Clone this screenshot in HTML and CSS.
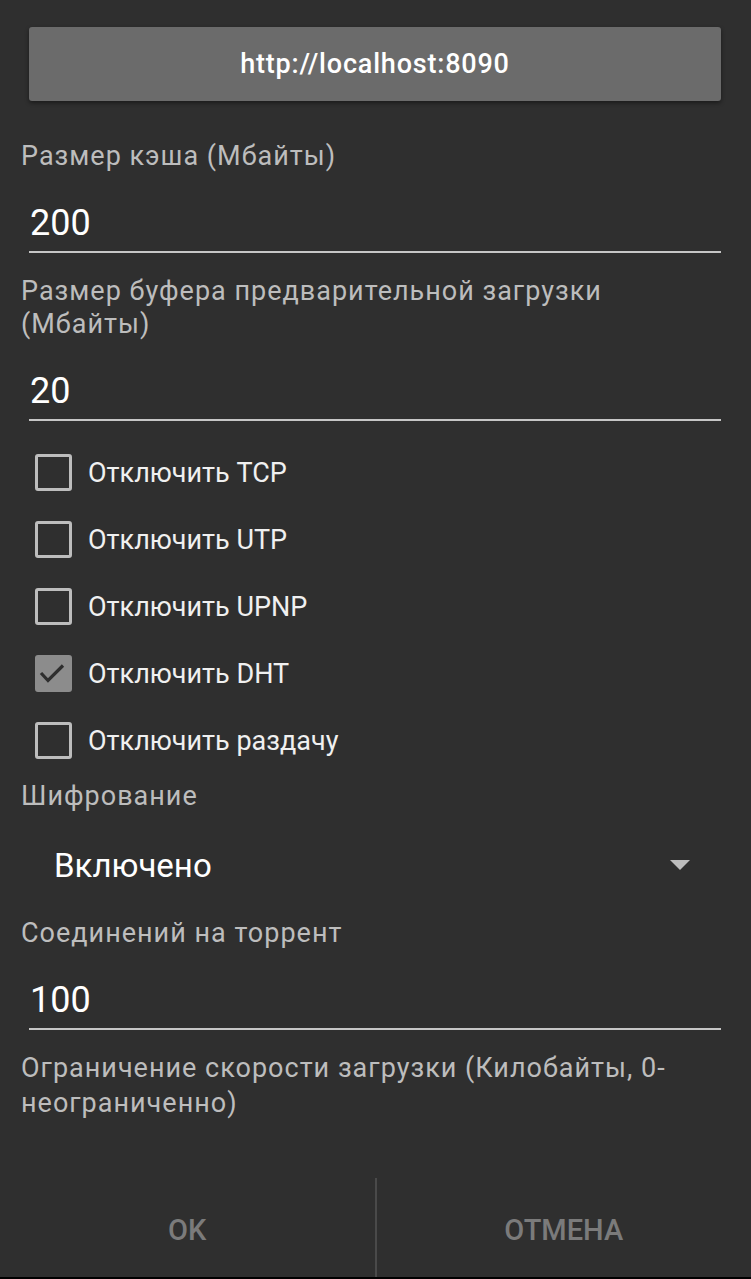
FILE: index.html
```html
<!DOCTYPE html>
<html>
  <head>
    <title>Настройки</title>
    <link rel="stylesheet" href="styles.css">
  </head>
  <body>
    <div class="dialog">
      <div class="content">
        <div class="url-button">http://localhost:8090</div>

        <div class="label">Размер кэша (Мбайты)</div>
        <div class="field">200</div>

        <div class="label">Размер буфера предварительной загрузки (Мбайты)</div>
        <div class="field">20</div>

        <div class="checks">
          <div class="check-row"><span class="box"></span><span class="check-text">Отключить TCP</span></div>
          <div class="check-row"><span class="box"></span><span class="check-text">Отключить UTP</span></div>
          <div class="check-row"><span class="box"></span><span class="check-text">Отключить UPNP</span></div>
          <div class="check-row">
            <span class="box checked">
              <svg width="37" height="37" viewBox="0 0 37 37"><polyline points="6,18 13,25.5 28,10.5" fill="none" stroke="#2e2e2e" stroke-width="3.2"/></svg>
            </span>
            <span class="check-text">Отключить DHT</span>
          </div>
          <div class="check-row"><span class="box"></span><span class="check-text">Отключить раздачу</span></div>
        </div>

        <div class="label label-spin">Шифрование</div>
        <div class="spinner">
          <span class="spinner-value">Включено</span>
          <span class="arrow"></span>
        </div>

        <div class="label label-after-spin">Соединений на торрент</div>
        <div class="field">100</div>

        <div class="label label-last">Ограничение скорости загрузки (Килобайты, 0-неограниченно)</div>
      </div>

      <div class="buttons">
        <div class="btn">OK</div>
        <div class="btn">ОТМЕНА</div>
      </div>
    </div>
  </body>
</html>
```

FILE: styles.css
```css
/* общий фон */
body {
  margin: 0;
  background-color: #2f2f2f;
  font-family: Roboto, "Noto Sans", sans-serif;
}

.dialog {
  height: 1279px;
  display: flex;
  flex-direction: column;
}

.content {
  flex: 1;
}

/* кнопка адреса */
.url-button {
  margin: 27px 30px 0 29px;
  height: 74px;
  display: flex;
  align-items: center;
  justify-content: center;
  background-color: #6b6b6b;
  border-radius: 3px;
  box-shadow: 0 2px 4px rgba(0, 0, 0, 0.45);
  color: #fff;
  font-size: 27px;
  font-weight: 500;
  letter-spacing: 0.8px;
}

/* подписи */
.label {
  margin: 22px 20px 0 21px;
  font-size: 27px;
  letter-spacing: 1px;
  line-height: 33px;
  color: #bdbdbd;
}

.url-button + .label {
  margin-top: 39px;
}

.label-spin {
  margin-top: 6px;
}

.label-after-spin {
  margin-top: 0;
}

.label-last {
  margin-top: 21px;
  line-height: 35px;
}

/* поля ввода */
.field {
  margin: 0 30px 0 29px;
  padding: 28px 0 6px 1px;
  font-size: 36px;
  line-height: 44px;
  color: #fff;
  border-bottom: 2px solid #c6c6c6;
}

/* флажки */
.checks {
  margin-top: 18px;
}

.check-row {
  height: 67px;
  display: flex;
  align-items: center;
  padding-left: 35px;
}

.box {
  width: 31px;
  height: 31px;
  border: 3px solid #bdbdbd;
  border-radius: 3px;
  margin-right: 16px;
  position: relative;
}

.box.checked {
  background-color: #8c8c8c;
  border-color: #8c8c8c;
}

.box svg {
  position: absolute;
  left: -3px;
  top: -3px;
}

.check-text {
  font-size: 27px;
  color: #f0f0f0;
}

/* выпадающий список */
.spinner {
  height: 104px;
  display: flex;
  align-items: center;
  justify-content: space-between;
  padding: 0 61px 0 54px;
}

.spinner-value {
  font-size: 33px;
  color: #fff;
}

.arrow {
  width: 0;
  height: 0;
  border-left: 10px solid transparent;
  border-right: 10px solid transparent;
  border-top: 10px solid #bdbdbd;
}

/* нижние кнопки */
.buttons {
  display: flex;
  height: 99px;
  border-bottom: 2px solid #000;
}

.btn {
  flex: 1;
  display: flex;
  align-items: center;
  justify-content: center;
  padding-top: 5px;
  font-size: 29px;
  font-weight: 500;
  color: #7b7b7b;
}

.btn + .btn {
  border-left: 2px solid #4a4a4a;
}
```
